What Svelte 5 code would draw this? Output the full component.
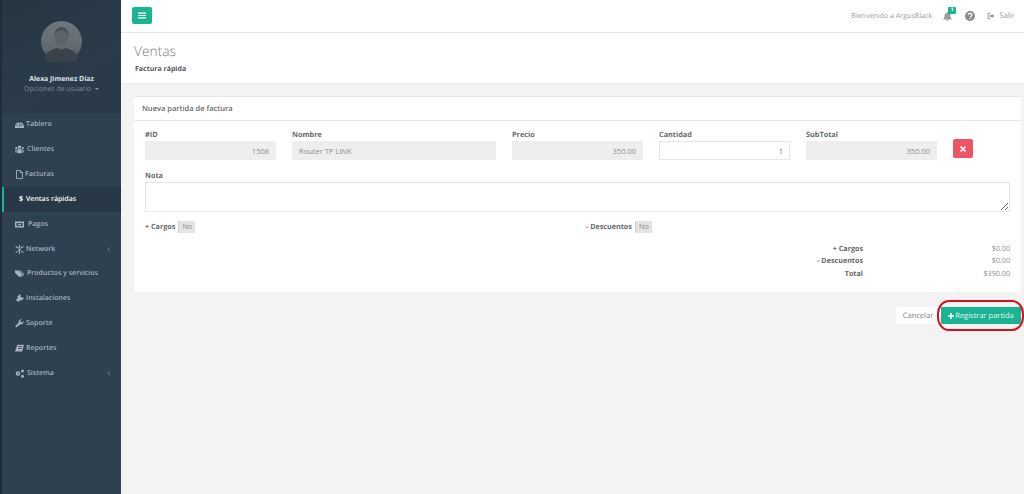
<script>
  const menu = [
    { label: "Tablero", icon: "M0 9a6 6 0 0 1 12 0v1.500H0zM2 6h1.500v1.500H2zM8.500 6H10v1.500H8.500zM5 3h1.500v1.500H5zM5.500 9l1-4 1 .3-1 4z", gap: 2 },
    { label: "Clientes", icon: "M4 1h4v3.500H4zM.5 2.500h2.500v3H.5zM9 2.500h2.500v3H9zM3 5.500h6V11H3zM.5 6.500H2V10H.5zM10 6.500h1.500V10H10z", gap: 3 },
    { label: "Facturas", outline: true, icon: "M2 .7h5l3 3v7.600H2zM7 .7v3h3", gap: 1 },
    { label: "Ventas rápidas", active: true, gap: 3 },
    { label: "Pagos", icon: "M0 2h12v8H0zM2 4v4h8V4zM4 5h4v2H4z", gap: 4 },
    { label: "Network", arrow: true, icon: "M5.300 0h1.400v4H5.300zM5.300 8h1.400v4H5.300zM.5 2.500l.7-1.200 3.500 2-.7 1.200zM7.500 8.700l.7-1.200 3.500 2-.7 1.200zM.5 9.500l3.500-2 .7 1.200-3.500 2zM7.500 3.300l3.500-2 .7 1.200-3.500 2zM4.500 4.500h3v3h-3z", gap: 2 },
    { label: "Productos y servicios", icon: "M0 2h5l5 5-4 4-6-6zM6 2h1.500l5 5-4 4-.8-.8L11 7z", gap: 3 },
    { label: "Instalaciones", icon: "M6 0l2 2-1 1 2 2 1-1 2 2-2 1-1 2-2-1-3 3-1-2-2-1 3-3-1-2 2-1z", gap: 2 },
    { label: "Soporte", icon: "M11 2.500 9 4.500 7.500 4 7 2.500 9 .5a3.300 3.300 0 0 0-4 4L.8 9a1.200 1.200 0 0 0 1.700 1.700L7 7a3.300 3.300 0 0 0 4-4.500z", gap: 2 },
    { label: "Reportes", icon: "M3 1h9L9.500 10H0zM4.500 3v1h5V3zM4 5.500v1h5v-1z", gap: 2 },
    { label: "Sistema", arrow: true, icon: "M4 3a3 3 0 1 1 0 6 3 3 0 0 1 0-6zm0 2a1 1 0 1 0 0 2 1 1 0 0 0 0-2zM10 .5a2 2 0 1 1 0 4 2 2 0 0 1 0-4zM10 7.500a2 2 0 1 1 0 4 2 2 0 0 1 0-4z", gap: 3 }
  ];

  const totals = [
    { label: "+ Cargos", value: "$0.00" },
    { label: "- Descuentos", value: "$0.00" },
    { label: "Total", value: "$350.00" }
  ];
</script>

<div class="layout">
  <aside class="sidebar">
    <div class="profile">
      <div class="avatar">
        <svg viewBox="0 0 40 40" width="41" height="41">
          <defs>
            <linearGradient id="fade" x1="0" y1="0" x2="0" y2="1">
              <stop offset="0" stop-color="#6f787f" />
              <stop offset="0.7" stop-color="#5f686f" />
              <stop offset="1" stop-color="#2e3d4a" />
            </linearGradient>
          </defs>
          <circle cx="20" cy="20" r="20" fill="url(#fade)" />
          <path d="M13 15c0-6 3-9 7-9s7 3 7 9c0 5-3 9-7 9s-7-4-7-9z" fill="#5c656c" />
          <path d="M13 14c1-6 4-8 7-8s6 2 7 8c-2-4-5-5-7-5s-5 1-7 5z" fill="#454e55" />
          <path d="M4 36c1-6 7-8 12-10l4 2 4-2c5 2 11 4 12 10l-2 4H6z" fill="#3a434b" />
        </svg>
      </div>
      <strong>Alexa Jimenez Díaz</strong>
      <span class="options">Opciones de usuario <i class="caret"></i></span>
    </div>
    <nav>
      {#each menu as item}
        <a href="#top" class:active={item.active} style:gap="{item.gap}px">
          {#if item.active}
            <span class="dollar">$</span>
          {:else}
            <svg class="nav-icon" viewBox="0 0 12 12" width="9" height="9">
              <path d={item.icon} class:outline={item.outline} fill-rule="evenodd" />
            </svg>
          {/if}
          <span>{item.label}</span>
          {#if item.arrow}
            <svg class="chevron" viewBox="0 0 6 8" width="4" height="5"><path d="M4.500 1 1.500 4l3 3" /></svg>
          {/if}
        </a>
      {/each}
    </nav>
  </aside>

  <main class="content">
    <header class="topbar">
      <button class="burger" aria-label="Menú">
        <svg viewBox="0 0 8 7" width="8" height="7"><path d="M0 .5h8v1.200H0zM0 2.900h8v1.200H0zM0 5.300h8v1.200H0z" /></svg>
      </button>
      <div class="top-right">
        <span class="welcome">Bienvenido a ArgusBlack</span>
        <span class="bell">
          <svg viewBox="0 0 12 12" width="9" height="9"><path d="M6 0a1 1 0 0 1 1 1c2 .5 3 2 3 4 0 2 .5 3 1.500 4v1H.5V9C1.500 8 2 7 2 5c0-2 1-3.500 3-4a1 1 0 0 1 1-1zM4.500 10.500h3a1.500 1.500 0 0 1-3 0z" /></svg>
          <b class="badge">1</b>
        </span>
        <svg class="help" viewBox="0 0 12 12" width="10" height="10">
          <circle cx="6" cy="6" r="6" />
          <path d="M3.800 4.600C4 3.300 5 2.800 6 2.800c1.300 0 2.300.8 2.300 1.900 0 1.500-1.700 1.500-1.700 2.500M5.900 8.200v1.400" />
        </svg>
        <span class="logout">
          <svg viewBox="0 0 12 12" width="8" height="8"><path d="M5 1H1v10h4V9.500H2.500v-7H5zM7 2.500 11.500 6 7 9.500V7.500H4v-3h3z" /></svg>
          Salir
        </span>
      </div>
    </header>

    <section class="heading">
      <h1>Ventas</h1>
      <strong>Factura rápida</strong>
    </section>

    <section class="body">
      <div class="card">
        <h2>Nueva partida de factura</h2>
        <div class="card-body">
          <div class="row">
            <label>#ID<input class="num" readonly value="1508" /></label>
            <label>Nombre<input readonly value="Router TP LINK" /></label>
            <label>Precio<input class="num" readonly value="350.00" /></label>
            <label>Cantidad<input class="num editable" value="1" /></label>
            <label>SubTotal<input class="num" readonly value="350.00" /></label>
            <button class="remove" aria-label="Quitar">
              <svg viewBox="0 0 8 8" width="6" height="6"><path d="M1.500 0 4 2.500 6.500 0 8 1.500 5.500 4 8 6.500 6.500 8 4 5.500 1.500 8 0 6.500 2.500 4 0 1.500z" /></svg>
            </button>
          </div>
          <label class="note">Nota<textarea></textarea></label>
          <div class="switches">
            <div class="switch-item"><b>+ Cargos</b><span class="switch">No</span></div>
            <div class="switch-item"><b>- Descuentos</b><span class="switch">No</span></div>
          </div>
          <div class="totals">
            {#each totals as t}
              <b>{t.label}</b><span>{t.value}</span>
            {/each}
          </div>
        </div>
      </div>
      <div class="actions">
        <button class="cancel">Cancelar</button>
        <button class="save">
          <svg viewBox="0 0 8 8" width="6" height="6"><path d="M3 0h2v3h3v2H5v3H3V5H0V3h3z" /></svg>
          Registrar partida
        </button>
        <span class="highlight"></span>
      </div>
    </section>
  </main>
</div>

<style>
  :global(body) {
    margin: 0;
    overflow: hidden;
  }

  .layout {
    display: flex;
    height: 494px;
    font-family: "Open Sans", sans-serif;
    font-size: 7.200px;
    text-rendering: geometricPrecision;
    color: #676a6c;
    background: #f3f3f4;
  }

  .sidebar {
    width: 119px;
    flex: none;
    background: #2f4050;
    border-left: 2px solid #1f2d3a;
    color: #a7b1c2;
  }

  .profile {
    height: 112.500px;
    box-sizing: border-box;
    padding-top: 21px;
    display: flex;
    flex-direction: column;
    align-items: center;
    background: linear-gradient(150deg, #263542 0%, #2b3b49 60%, #2a3a48 100%);
  }

  .avatar {
    height: 41px;
    margin-bottom: 13px;
  }

  .avatar svg {
    display: block;
  }

  .profile strong {
    color: #dfe4ed;
    font-size: 6.900px;
    line-height: 10px;
  }

  .options {
    font-size: 7px;
    line-height: 10px;
    color: #7d8b99;
  }

  .caret {
    display: inline-block;
    border: 2px solid transparent;
    border-top-color: #8a97a5;
    border-bottom: 0;
    vertical-align: middle;
    margin-left: 2px;
  }

  nav {
    display: flex;
    flex-direction: column;
  }

  nav a {
    height: 24.850px;
    display: flex;
    align-items: center;
    padding-left: 13px;
    padding-right: 10px;
    box-sizing: border-box;
    color: #a7b1c2;
    font-weight: 600;
    font-size: 7px;
    text-decoration: none;
  }

  nav a.active {
    background: #293846;
    color: #fff;
    border-left: 2px solid #1ab394;
    padding-left: 15px;
  }

  .dollar {
    width: 4px;
    font-weight: 700;
  }

  .nav-icon {
    flex: none;
    fill: #a7b1c2;
  }

  .nav-icon path.outline {
    fill: none;
    stroke: #a7b1c2;
    stroke-width: 1.200;
  }

  .chevron {
    margin-left: auto;
    fill: none;
    stroke: #a7b1c2;
    stroke-width: 1;
  }

  .content {
    flex: 1;
    min-width: 0;
    display: flex;
    flex-direction: column;
  }

  .topbar {
    height: 32px;
    flex: none;
    background: #fff;
    border-bottom: 1px solid #e7eaec;
    display: flex;
    align-items: center;
    justify-content: space-between;
    padding: 0 9px 0 11px;
  }

  .burger {
    width: 20px;
    height: 17px;
    padding: 0;
    border: 0;
    border-radius: 2px;
    background: #1ab394;
    display: flex;
    align-items: center;
    justify-content: center;
    margin-bottom: 1px;
  }

  .burger svg {
    fill: #fff;
  }

  .top-right {
    display: flex;
    align-items: center;
    color: #999c9e;
    font-size: 7.800px;
  }

  .welcome {
    font-size: 7.100px;
  }

  .bell {
    position: relative;
    display: flex;
    margin-left: 11px;
    margin-right: 13px;
  }

  .bell svg {
    fill: #999c9e;
  }

  .badge {
    position: absolute;
    left: 5px;
    top: -5px;
    width: 8px;
    height: 7px;
    border-radius: 1px;
    background: #1ab394;
    color: #fff;
    font-size: 5px;
    line-height: 7px;
    text-align: center;
  }

  .help {
    margin-right: 12px;
  }

  .help circle {
    fill: #8a8d8f;
  }

  .help path {
    fill: none;
    stroke: #fff;
    stroke-width: 1.500;
  }

  .logout {
    display: flex;
    align-items: center;
    gap: 4px;
  }

  .logout svg {
    fill: #999c9e;
  }

  .heading {
    height: 50px;
    flex: none;
    background: #fff;
    border-bottom: 1px solid #eceef0;
    padding-left: 13px;
  }

  .heading h1 {
    margin: 10px 0 4px;
    font-size: 13.800px;
    font-weight: 300;
    line-height: 18px;
    color: #7d8082;
  }

  .heading strong {
    display: block;
    margin-left: 1px;
    font-size: 7px;
    line-height: 10px;
    color: #55585a;
  }

  .body {
    padding: 12px 3px 0 13px;
  }

  .card {
    background: #fff;
    border-top: 1px solid #e7eaec;
    height: 195px;
  }

  .card h2 {
    margin: 0;
    height: 24px;
    box-sizing: border-box;
    padding: 7px 0 0 8px;
    border-bottom: 1px solid #e7eaec;
    font-size: 7.500px;
    line-height: 10px;
    font-weight: 600;
    color: #676a6c;
  }

  .card-body {
    padding: 9px 11px 0;
  }

  label {
    display: flex;
    flex-direction: column;
    gap: 1px;
    font-size: 7.300px;
    line-height: 10px;
    font-weight: 700;
    color: #676a6c;
  }

  .row {
    display: grid;
    grid-template-columns: 131px 204px 131px 131px 131px 21px;
    column-gap: 16px;
    align-items: start;
  }

  input,
  textarea {
    box-sizing: border-box;
    font-family: inherit;
    font-weight: 400;
    font-size: 7.500px;
    color: #8a8d8f;
    border: 1px solid #e5e6e7;
    background: #fff;
    outline: none;
    border-radius: 0;
  }

  input {
    width: 100%;
    height: 19px;
    padding: 0 6px;
    background: #eeeeee;
    border-color: #eeeeee;
  }

  input.num {
    text-align: right;
    padding-right: 6px;
  }

  input.editable {
    background: #fff;
    border-color: #e5e6e7;
    color: #676a6c;
  }

  .remove {
    width: 20px;
    height: 19px;
    margin-top: 9px;
    padding: 0;
    border: 0;
    border-radius: 2px;
    background: #ed5565;
    display: flex;
    align-items: center;
    justify-content: center;
  }

  .remove svg {
    fill: #fff;
  }

  .note {
    margin-top: 11px;
    gap: 1px;
  }

  textarea {
    display: block;
    width: 865px;
    height: 30px;
  }

  .switches {
    display: grid;
    grid-template-columns: 441px 1fr;
    margin-top: 9px;
  }

  .switch-item {
    display: flex;
    align-items: center;
    gap: 3px;
    color: #676a6c;
  }

  .switch {
    width: 16px;
    height: 12px;
    background: #e4e4e4;
    border-left: 1px solid #cfcfcf;
    text-align: center;
    line-height: 13px;
    font-size: 7.200px;
    color: #8a8d8f;
    border-radius: 1px;
  }

  .totals {
    display: grid;
    grid-template-columns: 1fr 147px;
    width: 230px;
    margin-left: auto;
    margin-top: 11px;
    row-gap: 2.400px;
    text-align: right;
    line-height: 10px;
  }

  .totals b {
    font-weight: 700;
  }

  .totals span {
    color: #8a8d8f;
  }

  .actions {
    position: relative;
    display: flex;
    justify-content: flex-end;
    gap: 1px;
    margin-top: 15px;
  }

  .actions button {
    height: 17px;
    padding: 0;
    border: 0;
    border-radius: 1px;
    font-family: inherit;
    font-size: 7.500px;
    text-rendering: geometricPrecision;
  }

  .cancel {
    width: 44px;
    background: #fff;
    color: #7f8284;
  }

  .save {
    width: 80px;
    background: #1ab394;
    color: #e9f8f5;
    display: flex;
    align-items: center;
    justify-content: center;
    gap: 1px;
  }

  .save svg {
    fill: #fff;
  }

  .highlight {
    position: absolute;
    right: -3px;
    top: -7px;
    width: 83px;
    height: 27px;
    border: 2px solid #d6101f;
    border-radius: 12px / 14px;
  }
</style>
